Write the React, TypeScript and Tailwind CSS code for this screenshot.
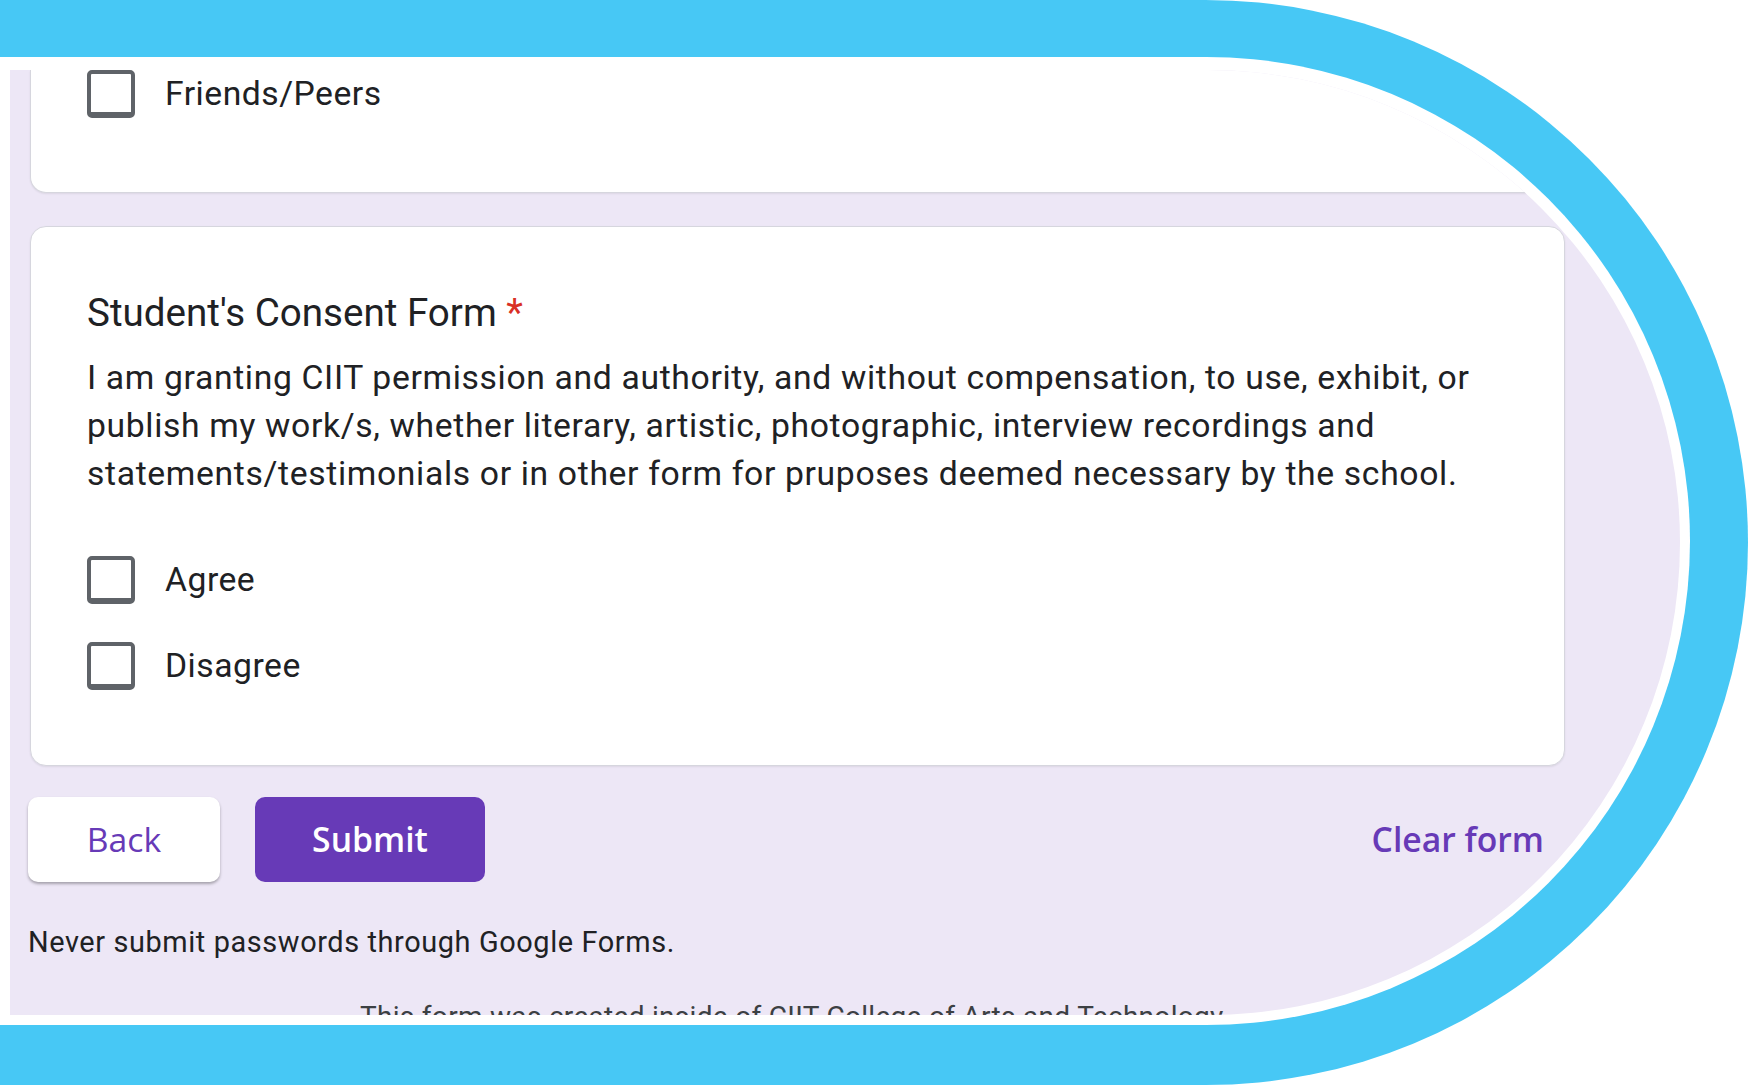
import React from "react";

function Checkbox() {
  return (
    <div className="w-[48px] h-[48px] shrink-0 rounded-[5px] border-[4px] border-b-[6px] border-[#5f6368] bg-white" />
  );
}

function Option({ label }: { label: string }) {
  return (
    <div className="flex items-center h-[48px]">
      <Checkbox />
      <span className="ml-[30px] text-[33.7px] leading-[48px] tracking-[0.5px] text-[#202124]">{label}</span>
    </div>
  );
}

export default function App() {
  return (
    <div className="w-[1748px] h-[1085px] bg-white overflow-hidden font-['Roboto',sans-serif]">
      <div className="h-full bg-[#47c8f5] rounded-r-[543px] pt-[57px] pb-[60px] pr-[58px]">
        <div className="h-full bg-white rounded-r-[484px] pt-[13px] pb-[10px] pr-[10px] pl-[10px]">
          <div className="h-full bg-[#ede7f6] rounded-r-[473px] overflow-hidden">
            <div className="flex flex-col pl-[20px]">
              {/* Card 1 */}
              <div className="w-[1535px] bg-white rounded-b-[16px] border-x border-b border-[#d6d6de] shadow-[0_1px_2px_rgba(0,0,0,0.08)] pl-[56px] pb-[74px]">
                <Option label="Friends/Peers" />
              </div>

              {/* Card 2 */}
              <div className="mt-[33px] w-[1535px] bg-white rounded-[16px] border border-[#d6d6de] shadow-[0_1px_2px_rgba(0,0,0,0.08)] pl-[56px] pt-[57px] pb-[75px]">
                <div className="text-[38.6px] leading-[58px] text-[#202124]">
                  Student&apos;s Consent Form<span className="text-[#d93025]"> *</span>
                </div>
                <p className="mt-[12px] text-[33.7px] leading-[48px] tracking-[0.65px] text-[#202124]">
                  I am granting CIIT permission and authority, and without compensation, to use, exhibit, or
                  <br />
                  publish my work/s, whether literary, artistic, photographic, interview recordings and
                  <br />
                  statements/testimonials or in other form for pruposes deemed necessary by the school.
                </p>
                <div className="mt-[58px] flex flex-col gap-[38px]">
                  <Option label="Agree" />
                  <Option label="Disagree" />
                </div>
              </div>

              {/* Buttons */}
              <div className="mt-[31px] ml-[-2px] w-[1537px] flex items-center">
                <button className="w-[192px] h-[85px] rounded-[10px] bg-white shadow-[0_2px_3px_rgba(0,0,0,0.3)] text-[#673ab7] text-[33.7px] font-medium font-['Open_Sans',sans-serif]">
                  Back
                </button>
                <button className="ml-[35px] w-[230px] h-[85px] rounded-[10px] bg-[#673ab7] text-white text-[33.7px] font-semibold font-['Open_Sans',sans-serif]">
                  Submit
                </button>
                <button className="ml-auto pr-[21px] h-[85px] text-[#673ab7] text-[33.7px] font-semibold font-['Open_Sans',sans-serif]">
                  Clear form
                </button>
              </div>

              <div className="mt-[40px] ml-[-2px] text-[28.9px] leading-[40px] tracking-[0.6px] text-[#202124]">
                Never submit passwords through Google Forms.
              </div>

              <div className="mt-[35px] ml-[330px] text-[28px] leading-[40px] tracking-[0.3px] text-[#3c4043]">
                This form was created inside of CIIT College of Arts and Technology.
              </div>
            </div>
          </div>
        </div>
      </div>
    </div>
  );
}
